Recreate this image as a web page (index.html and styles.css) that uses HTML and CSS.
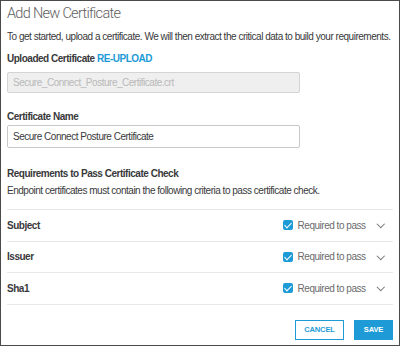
FILE: index.html
```html
<!DOCTYPE html>
<html>
<head>
    <meta charset="UTF-8">
    <title>Add New Certificate</title>
    <link rel="stylesheet" href="styles.css">
</head>
<body>

<div class="dialog">
    <h1 class="title">Add New Certificate</h1>
    <p class="intro">To get started, upload a certificate. We will then extract the critical data to build your requirements.</p>

    <div class="field">
        <div class="label">Uploaded Certificate <a href="javascript:;" class="link">RE-UPLOAD</a></div>
        <input class="input input-disabled" type="text" placeholder="Secure_Connect_Posture_Certificate.crt" disabled>
    </div>

    <div class="field field-name">
        <div class="label">Certificate Name</div>
        <input class="input" type="text" value="Secure Connect Posture Certificate">
    </div>

    <div class="section">
        <div class="label">Requirements to Pass Certificate Check</div>
        <p class="hint">Endpoint certificates must contain the following criteria to pass certificate check.</p>
    </div>

    <ul class="rows">
        <li class="row">
            <span class="row-name">Subject</span>
            <span class="check"><span class="box"></span>Required to pass</span>
            <span class="chevron"></span>
        </li>
        <li class="row">
            <span class="row-name">Issuer</span>
            <span class="check"><span class="box"></span>Required to pass</span>
            <span class="chevron"></span>
        </li>
        <li class="row">
            <span class="row-name">Sha1</span>
            <span class="check"><span class="box"></span>Required to pass</span>
            <span class="chevron"></span>
        </li>
    </ul>

    <div class="actions">
        <a href="javascript:;" class="btn btn-ghost">CANCEL</a>
        <a href="javascript:;" class="btn btn-primary">SAVE</a>
    </div>
</div>

</body>
</html>
```

FILE: styles.css
```css
* {
    margin: 0;
    padding: 0;
    box-sizing: border-box;
    text-decoration: none;
}

body {
    background: #fff;
    font-family: "Liberation Sans", Arial, sans-serif;
    font-size: 10px;
    letter-spacing: -0.48px;
    color: #39393b;
}

.dialog {
    width: 400px;
    height: 346px;
    border: 1px solid #4a4a4a;
    padding: 4px 6px 0 6px;
}

.title {
    font-family: Roboto, "Liberation Sans", sans-serif;
    font-weight: 300;
    font-size: 14.5px;
    letter-spacing: -0.7px;
    line-height: 18px;
    color: #5e5e60;
    margin-bottom: 8px;
}

.intro {
    white-space: nowrap;
}

.intro,
.hint,
.label {
    line-height: 12px;
}

.label {
    font-weight: bold;
}

.field {
    margin-top: 10px;
}

.link {
    color: #1e9bd7;
    font-weight: bold;
}

.input {
    display: block;
    width: 293px;
    height: 21px;
    margin-top: 7px;
    padding: 0 5px;
    border: 1px solid #c8c8c8;
    border-radius: 2px;
    font-family: "Liberation Sans", Arial, sans-serif;
    font-size: 10px;
    letter-spacing: -0.48px;
    color: #39393b;
    background: #fff;
}

.input-disabled {
    background: #efefef;
    border-color: #d4d4d4;
}

.input-disabled::placeholder {
    color: #b9b9b9;
}

.field-name {
    margin-top: 18px;
}

.field-name .input {
    height: 23px;
    margin-top: 2px;
}

.section {
    margin-top: 20px;
}

.hint {
    margin-top: 5px;
}

.rows {
    list-style: none;
    margin-top: 12px;
    border-top: 1px solid #e8e8e8;
}

.row {
    display: flex;
    align-items: center;
    height: 31.5px;
    padding-right: 10px;
    border-bottom: 1px solid #e8e8e8;
}

.row-name {
    flex: 1;
    font-weight: bold;
}

.check {
    display: flex;
    align-items: center;
    gap: 5px;
    color: #6b6b6d;
}

.box {
    width: 10px;
    height: 10px;
    border-radius: 2px;
    background: #1e9bd7;
    position: relative;
}

.box::after {
    content: "";
    position: absolute;
    left: 3px;
    top: 1px;
    width: 3px;
    height: 6px;
    border: solid #fff;
    border-width: 0 1.5px 1.5px 0;
    transform: rotate(45deg);
}

.chevron {
    width: 5.5px;
    height: 5.5px;
    margin-left: 12px;
    margin-top: -3px;
    border: solid #6b6b6d;
    border-width: 0 1px 1px 0;
    transform: rotate(45deg);
}

.actions {
    display: flex;
    justify-content: flex-end;
    gap: 10px;
    margin-top: 15px;
}

.btn {
    display: flex;
    align-items: center;
    justify-content: center;
    height: 20px;
    font-size: 7.5px;
    letter-spacing: -0.1px;
    font-weight: bold;
}

.btn-ghost {
    width: 49px;
    border: 1px solid #1e9bd7;
    color: #1e9bd7;
    background: #fff;
}

.btn-primary {
    width: 39px;
    background: #1e9bd7;
    color: #fff;
}
```
